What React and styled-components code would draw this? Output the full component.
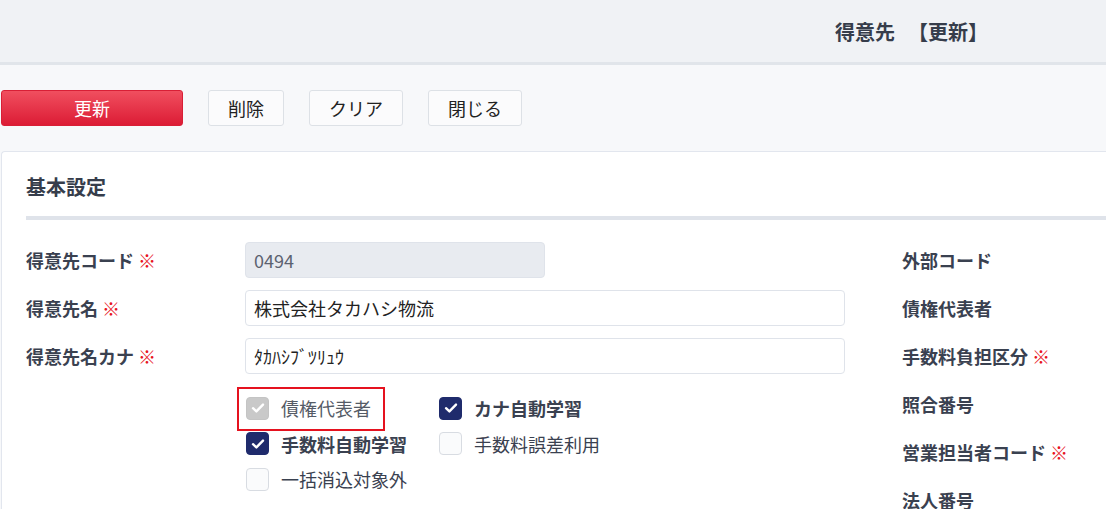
import React from 'react';
import styled, { createGlobalStyle } from 'styled-components';

const GlobalStyle = createGlobalStyle`
  html, body {
    margin: 0;
    padding: 0;
    background: #f7f8fa;
    font-family: "Noto Sans CJK JP", "Noto Sans", sans-serif;
    color: #3a4150;
    overflow: hidden;
  }
`;

const Page = styled.div`
  width: 1106px;
  height: 509px;
  overflow: hidden;
`;

const Header = styled.header`
  height: 62px;
  background: #f0f2f5;
  border-bottom: 3px solid #e1e5ea;
  display: flex;
  align-items: center;
  padding-left: 835px;
`;

const Title = styled.h1`
  margin: 0;
  font-size: 20px;
  font-weight: 700;
  color: #363d4b;
  white-space: nowrap;
`;

const Mode = styled.span`
  margin-left: 13px;
`;

const Toolbar = styled.div`
  display: flex;
  gap: 25px;
  padding: 25px 0 0 1px;
  height: 36px;
`;

const Button = styled.button`
  height: 36px;
  padding: 0 19px;
  font-family: inherit;
  font-size: 18px;
  border-radius: 3px;
  cursor: pointer;
  color: #222;
  background: #fbfbfc;
  border: 1px solid #dde1e6;

  ${(p) =>
    p.$primary &&
    `
    width: 182px;
    color: #fff;
    border: 1px solid #d81f36;
    background: linear-gradient(#f04f5f, #dc1c35);
  `}
`;

const Card = styled.section`
  margin: 25px 0 0 1px;
  background: #fff;
  border: 1px solid #e2e6ee;
  border-right: none;
  border-radius: 4px 0 0 0;
  padding: 0 0 0 24px;
  height: 400px;
`;

const SectionTitle = styled.h2`
  margin: 0;
  padding: 20px 0 14px;
  font-size: 20px;
  font-weight: 700;
  color: #363d4b;
  border-bottom: 4px solid #dfe3ea;
  line-height: 30px;
`;

const Columns = styled.div`
  display: flex;
  padding-top: 22px;
`;

const LeftCol = styled.div`
  width: 820px;
  display: flex;
  flex-direction: column;
  gap: 12px;
`;

const RightCol = styled.div`
  margin-left: 56px;
  display: flex;
  flex-direction: column;
  gap: 12px;
`;

const Row = styled.div`
  display: flex;
  align-items: center;
  height: 36px;
`;

const Label = styled.label`
  width: 219px;
  font-size: 18px;
  font-weight: 700;
  color: #3a4150;
  white-space: nowrap;
`;

const Required = styled.span`
  color: #e8141e;
  margin-left: 4px;
`;

const Input = styled.input`
  box-sizing: border-box;
  height: 36px;
  width: ${(p) => p.$width || 600}px;
  border: 1px solid #dfe3ea;
  border-radius: 4px;
  padding: 0 8px;
  font-family: inherit;
  font-size: 18px;
  color: #222;
  background: #fff;
  outline: none;

  &:disabled {
    background: #e8ebf0;
    color: #5c6270;
  }
`;

const CheckGrid = styled.div`
  display: grid;
  grid-template-columns: 193px 200px;
  row-gap: 11.5px;
  margin: 10px 0 0 220px;
`;

const CheckItem = styled.div`
  position: relative;
  display: flex;
  align-items: center;
  gap: 12px;
  height: 24px;
  font-size: 18px;
  font-weight: ${(p) => (p.$checked && !p.$disabled ? 700 : 400)};
  color: ${(p) => (p.$disabled ? '#555b66' : '#3a4150')};
  white-space: nowrap;
`;

const Highlight = styled.div`
  position: absolute;
  left: -9px;
  top: -9px;
  width: 144px;
  height: 40px;
  border: 2px solid #e5121f;
`;

const Box = styled.span`
  box-sizing: border-box;
  flex: none;
  width: 23px;
  height: 23px;
  border-radius: 4px;
  display: flex;
  align-items: center;
  justify-content: center;
  background: ${(p) => (p.$disabled ? '#c9c9c9' : p.$checked ? '#1f2b6c' : '#fafbfc')};
  border: 1px solid ${(p) => (p.$disabled ? '#c4c4c4' : p.$checked ? '#1f2b6c' : '#d8dce2')};
`;

const RightLabel = styled.div`
  height: 36px;
  display: flex;
  align-items: center;
  font-size: 18px;
  font-weight: 700;
  color: #3a4150;
  white-space: nowrap;
`;

const Tick = () => (
  <svg width="14" height="12" viewBox="0 0 14 12">
    <path d="M2 6.2 L5.4 9.4 L12 2.6" fill="none" stroke="#fff" strokeWidth="2.4" strokeLinecap="round" strokeLinejoin="round" />
  </svg>
);

const Check = ({ label, checked, disabled, highlight }) => (
  <CheckItem $checked={checked} $disabled={disabled}>
    {highlight && <Highlight />}
    <Box $checked={checked} $disabled={disabled}>{checked && <Tick />}</Box>
    {label}
  </CheckItem>
);

const rightLabels = [
  { text: '外部コード' },
  { text: '債権代表者' },
  { text: '手数料負担区分', required: true },
  { text: '照合番号' },
  { text: '営業担当者コード', required: true },
  { text: '法人番号' },
];

export default function App() {
  return (
    <Page>
      <GlobalStyle />
      <Header>
        <Title>
          得意先<Mode>【更新】</Mode>
        </Title>
      </Header>
      <Toolbar>
        <Button $primary>更新</Button>
        <Button>削除</Button>
        <Button>クリア</Button>
        <Button>閉じる</Button>
      </Toolbar>
      <Card>
        <SectionTitle>基本設定</SectionTitle>
        <Columns>
          <LeftCol>
            <Row>
              <Label>得意先コード<Required>※</Required></Label>
              <Input $width={300} value="0494" disabled readOnly />
            </Row>
            <Row>
              <Label>得意先名<Required>※</Required></Label>
              <Input value="株式会社タカハシ物流" readOnly />
            </Row>
            <Row>
              <Label>得意先名カナ<Required>※</Required></Label>
              <Input value="ﾀｶﾊｼﾌﾞﾂﾘｭｳ" readOnly />
            </Row>
            <CheckGrid>
              <Check label="債権代表者" checked disabled highlight />
              <Check label="カナ自動学習" checked />
              <Check label="手数料自動学習" checked />
              <Check label="手数料誤差利用" />
              <Check label="一括消込対象外" />
            </CheckGrid>
          </LeftCol>
          <RightCol>
            {rightLabels.map((l) => (
              <RightLabel key={l.text}>
                {l.text}
                {l.required && <Required>※</Required>}
              </RightLabel>
            ))}
          </RightCol>
        </Columns>
      </Card>
    </Page>
  );
}
